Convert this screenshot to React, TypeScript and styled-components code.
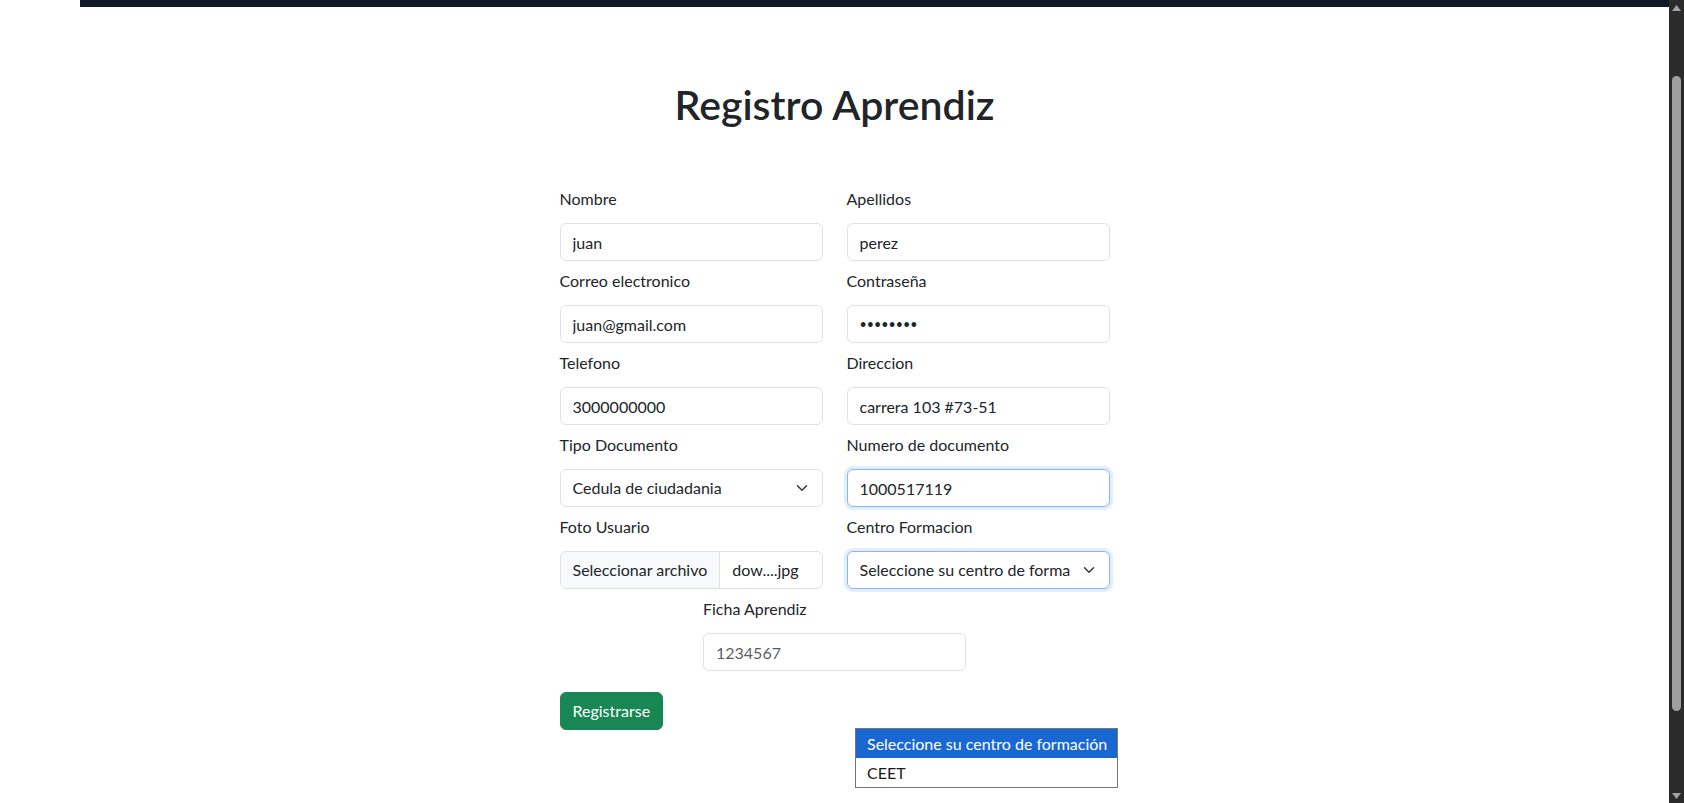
import React from "react";
import styled, { createGlobalStyle } from "styled-components";

const GlobalStyle = createGlobalStyle`
  html, body { margin: 0; padding: 0; height: 100%; overflow: hidden; background: #fff; }
  body {
    font-family: Lato, "Liberation Sans", sans-serif;
    font-size: 16px;
    line-height: 1.5;
    color: #212529;
  }
  *, *::before, *::after { box-sizing: border-box; }
`;

const Page = styled.div`
  display: flex;
  height: 803px;
`;

const Main = styled.main`
  flex: 1;
  min-width: 0;
  display: flex;
  flex-direction: column;
  position: relative;
`;

const TopBar = styled.div`
  height: 7px;
  margin-left: 80px;
  background: #111827;
`;

const Content = styled.div`
  display: flex;
  flex-direction: column;
  align-items: center;
  padding-top: 74px;
`;

const Title = styled.h1`
  margin: 0 0 58px;
  font-size: 41px;
  font-weight: 600;
  line-height: 48px;
  color: #212529;
`;

const Form = styled.form`
  width: 550px;
  display: grid;
  grid-template-columns: minmax(0, 1fr) minmax(0, 1fr);
  column-gap: 24px;
  row-gap: 8px;
`;

const Field = styled.div<{ $center?: boolean }>`
  min-width: 0;
  display: flex;
  flex-direction: column;
  ${(p) => (p.$center ? "grid-column: 1 / -1; justify-self: center; width: 263px;" : "")}
`;

const Label = styled.label`
  line-height: 24px;
  margin-bottom: 12px;
`;

const focusRing = `
  border-color: #86b7fe;
  box-shadow: 0 0 0 3px rgba(13, 110, 253, 0.12);
`;

const Input = styled.input<{ $focus?: boolean }>`
  display: block;
  width: 100%;
  height: 38px;
  padding: 6px 12px;
  font: inherit;
  color: #212529;
  background: #fff;
  border: 1px solid #dee2e6;
  border-radius: 6px;
  outline: none;
  ${(p) => (p.$focus ? focusRing : "")}
  &::placeholder { color: rgba(33, 37, 41, 0.75); }
`;

const PasswordInput = styled(Input)`
  font-size: 12.5px;
  letter-spacing: 0;
`;

const SelectBox = styled.div<{ $focus?: boolean }>`
  display: flex;
  align-items: center;
  height: 38px;
  padding: 0 12px;
  border: 1px solid #dee2e6;
  border-radius: 6px;
  background: #fff;
  ${(p) => (p.$focus ? focusRing : "")}
`;

const SelectText = styled.span`
  flex: 1;
  min-width: 0;
  white-space: nowrap;
  overflow: hidden;
  margin-right: 11px;
`;

const Chevron = () => (
  <svg width="16" height="12" viewBox="0 0 16 16" fill="none" style={{ flex: "none" }}>
    <path d="m2 5 6 6 6-6" stroke="#343a40" strokeWidth="2" strokeLinecap="round" strokeLinejoin="round" />
  </svg>
);

const FileBox = styled.div`
  display: flex;
  align-items: stretch;
  height: 38px;
  border: 1px solid #dee2e6;
  border-radius: 6px;
  overflow: hidden;
  background: #fff;
`;

const FileButton = styled.span`
  display: flex;
  align-items: center;
  padding: 0 12px;
  background: #f8f9fa;
  border-right: 1px solid #dee2e6;
  white-space: nowrap;
`;

const FileName = styled.span`
  display: flex;
  align-items: center;
  padding-left: 12px;
  white-space: nowrap;
`;

const SubmitButton = styled.button`
  grid-column: 1 / -1;
  justify-self: start;
  margin-top: 13px;
  height: 38px;
  padding: 0 12px;
  font: inherit;
  color: #fff;
  background: #198754;
  border: 1px solid #198754;
  border-radius: 6px;
`;

const Popup = styled.ul`
  position: absolute;
  left: 855px;
  top: 728px;
  width: 263px;
  margin: 0;
  padding: 0;
  list-style: none;
  background: #fff;
  border: 1px solid #767676;
`;

const Option = styled.li<{ $active?: boolean }>`
  height: 29px;
  line-height: 29px;
  padding-left: 11px;
  white-space: nowrap;
  color: ${(p) => (p.$active ? "#fff" : "#1a1a1a")};
  background: ${(p) => (p.$active ? "#1967d2" : "#fff")};
`;

const ScrollTrack = styled.div`
  width: 15px;
  flex: none;
  display: flex;
  flex-direction: column;
  align-items: center;
  background: #2b2b2b;
`;

const ArrowCell = styled.div`
  height: 15px;
  display: flex;
  align-items: center;
  justify-content: center;
`;

const ThumbArea = styled.div`
  flex: 1;
  width: 100%;
  padding: 61px 3px 77px;
  display: flex;
`;

const Thumb = styled.div`
  flex: 1;
  background: #9f9f9f;
  border-radius: 5px;
`;

const Tri = ({ down }: { down?: boolean }) => (
  <svg width="9" height="6" viewBox="0 0 9 6">
    <path d={down ? "M0 0h9L4.5 6z" : "M0 6h9L4.5 0z"} fill="#a3a3a3" />
  </svg>
);

export default function App() {
  return (
    <>
      <GlobalStyle />
      <Page>
        <Main>
          <TopBar />
          <Content>
            <Title>Registro Aprendiz</Title>
            <Form onSubmit={(e) => e.preventDefault()}>
              <Field>
                <Label>Nombre</Label>
                <Input defaultValue="juan" />
              </Field>
              <Field>
                <Label>Apellidos</Label>
                <Input defaultValue="perez" />
              </Field>
              <Field>
                <Label>Correo electronico</Label>
                <Input defaultValue="juan@gmail.com" />
              </Field>
              <Field>
                <Label>Contraseña</Label>
                <PasswordInput type="password" defaultValue="12345678" />
              </Field>
              <Field>
                <Label>Telefono</Label>
                <Input defaultValue="3000000000" />
              </Field>
              <Field>
                <Label>Direccion</Label>
                <Input defaultValue="carrera 103 #73-51" />
              </Field>
              <Field>
                <Label>Tipo Documento</Label>
                <SelectBox>
                  <SelectText>Cedula de ciudadania</SelectText>
                  <Chevron />
                </SelectBox>
              </Field>
              <Field>
                <Label>Numero de documento</Label>
                <Input $focus defaultValue="1000517119" />
              </Field>
              <Field>
                <Label>Foto Usuario</Label>
                <FileBox>
                  <FileButton>Seleccionar archivo</FileButton>
                  <FileName>dow....jpg</FileName>
                </FileBox>
              </Field>
              <Field>
                <Label>Centro Formacion</Label>
                <SelectBox $focus>
                  <SelectText>Seleccione su centro de formación</SelectText>
                  <Chevron />
                </SelectBox>
              </Field>
              <Field $center>
                <Label>Ficha Aprendiz</Label>
                <Input placeholder="1234567" />
              </Field>
              <SubmitButton type="submit">Registrarse</SubmitButton>
            </Form>
          </Content>
          <Popup>
            <Option $active>Seleccione su centro de formación</Option>
            <Option>CEET</Option>
          </Popup>
        </Main>
        <ScrollTrack>
          <ArrowCell>
            <Tri />
          </ArrowCell>
          <ThumbArea>
            <Thumb />
          </ThumbArea>
          <ArrowCell>
            <Tri down />
          </ArrowCell>
        </ScrollTrack>
      </Page>
    </>
  );
}
